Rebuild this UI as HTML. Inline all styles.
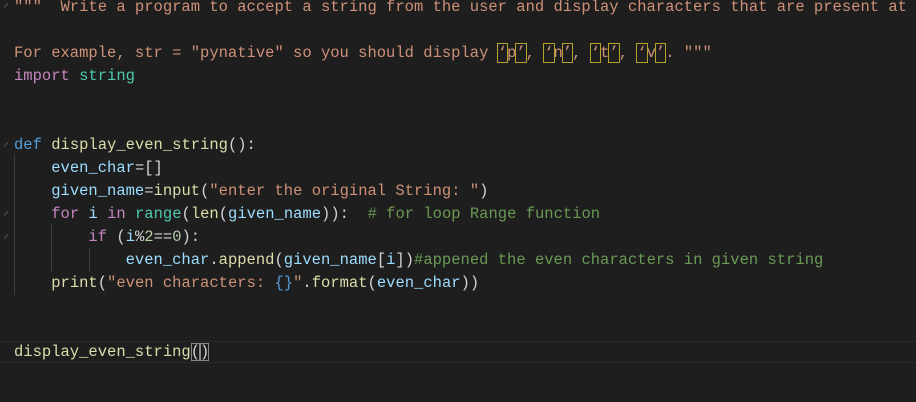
<!DOCTYPE html>
<html><head><meta charset="utf-8"><style>
html,body{margin:0;padding:0;background:#1e1e1e;width:916px;height:402px;overflow:hidden}
.l{position:absolute;left:14px;height:23px;line-height:23px;white-space:pre;font-family:"Liberation Mono",monospace;font-size:15.5px;color:#d4d4d4}
.s{color:#ce9178}.k{color:#c586c0}.b{color:#569cd6}.f{color:#dcdcaa}.v{color:#9cdcfe}.c{color:#4ec9b0}.g{color:#6a9955}.n{color:#b5cea8}
.q{outline:1px solid #b5a32a;outline-offset:0px}
.br{outline:1px solid #888;outline-offset:-1px}
.ig{position:absolute;width:1px;background:#404040}
.tk{position:absolute;left:3px;width:6px;height:1px;background:#555;transform:rotate(-50deg)}
</style></head><body>
<div style="position:absolute;left:0;top:341px;width:916px;height:20px;border-top:1px solid #2c2c2c;border-bottom:1px solid #2c2c2c"></div>
<div class="ig" style="left:14px;top:155px;height:140px"></div>
<div class="ig" style="left:51px;top:225px;height:47px"></div>
<div class="ig" style="left:89px;top:248px;height:24px"></div>
<div class="tk" style="top:5px"></div><div class="tk" style="top:144px"></div><div class="tk" style="top:213px"></div><div class="tk" style="top:236px"></div>
<div class="l s" style="top:-4px">"""  Write a program to accept a string from the user and display characters that are present at</div>
<div class="l s" style="top:42px">For example, str = "pynative" so you should display <span class="q">‘</span>p<span class="q">’</span>, <span class="q">‘</span>n<span class="q">’</span>, <span class="q">‘</span>t<span class="q">’</span>, <span class="q">‘</span>v<span class="q">’</span>. """</div>
<div class="l" style="top:65px"><span class="k">import</span> <span class="c">string</span></div>
<div class="l" style="top:134px"><span class="b">def</span> <span class="f">display_even_string</span>():</div>
<div class="l" style="top:157px">    <span class="v">even_char</span>=[]</div>
<div class="l" style="top:180px">    <span class="v">given_name</span>=<span class="f">input</span>(<span class="s">"enter the original String: "</span>)</div>
<div class="l" style="top:203px">    <span class="k">for</span> <span class="v">i</span> <span class="k">in</span> <span class="c">range</span>(<span class="f">len</span>(<span class="v">given_name</span>)):  <span class="g"># for loop Range function</span></div>
<div class="l" style="top:226px">        <span class="k">if</span> (<span class="v">i</span>%<span class="n">2</span>==<span class="n">0</span>):</div>
<div class="l" style="top:249px">            <span class="v">even_char</span>.<span class="f">append</span>(<span class="v">given_name</span>[<span class="v">i</span>])<span class="g">#appened the even characters in given string</span></div>
<div class="l" style="top:272px">    <span class="f">print</span>(<span class="s">"even characters: </span><span class="b">{}</span><span class="s">"</span>.<span class="f">format</span>(<span class="v">even_char</span>))</div>
<div class="l" style="top:341px"><span class="f">display_even_string</span><span class="br">(</span><span class="br">)</span></div>
</body></html>
